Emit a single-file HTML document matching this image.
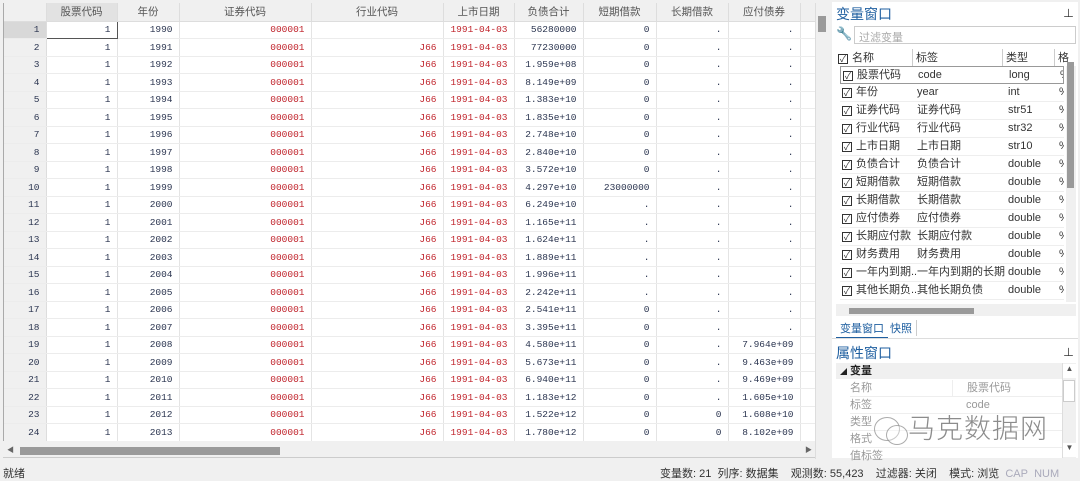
<!DOCTYPE html><html><head><meta charset="utf-8"><style>
*{margin:0;padding:0;box-sizing:border-box}
body{width:1080px;height:479px;background:#f0f0f0;position:relative;overflow:hidden;font-family:"Liberation Sans","Noto Sans CJK SC",sans-serif;}
.ab{position:absolute}
#grid{left:3px;top:3px;width:812px;height:438px;background:#fff;overflow:hidden;border-left:1px solid #aaa}
table{border-collapse:collapse;table-layout:fixed;font-family:"Liberation Mono",monospace;font-size:9.5px;color:#2b3550}
td,th{height:17.5px;border-right:1px solid #e4e4e4;border-bottom:1px solid #ececec;text-align:right;padding-right:6px;white-space:nowrap;overflow:hidden}
th{height:18px;background:#f0f0f0;font-family:"Liberation Sans","Noto Sans CJK SC",sans-serif;font-weight:normal;text-align:center;padding:0;color:#555;font-size:10.5px;border-right:1px solid #ddd;border-bottom:1px solid #ddd}
td.n{background:#f0f0f0;color:#2b3550;border-right:1px solid #ddd}
.r{color:#c0232b}
#side{left:832px;top:2px;width:246px;height:456px;background:#fff}
.vl{font-family:"Liberation Sans","Noto Sans CJK SC",sans-serif;font-size:11px;color:#333}
.vr{position:absolute;left:4px;height:18px;width:224px;border-bottom:1px solid #eee;line-height:17px;overflow:hidden}
.cb{display:inline-block;width:10px;height:10px;border:1px solid #333;vertical-align:-1px;margin-right:4px;position:relative;font-size:9px;line-height:8px;text-align:center;font-style:normal}
.vr span{position:absolute;white-space:nowrap}
</style></head><body>
<div id="grid" class="ab">
<table style="width:812px">
<colgroup><col style="width:42px"><col style="width:71px"><col style="width:62px"><col style="width:132px"><col style="width:132px"><col style="width:71px"><col style="width:69px"><col style="width:73px"><col style="width:72px"><col style="width:72px"><col style="width:16px"></colgroup>
<tr><th></th><th style="background:#e2e2e2">股票代码</th><th>年份</th><th>证券代码</th><th>行业代码</th><th>上市日期</th><th>负债合计</th><th>短期借款</th><th>长期借款</th><th>应付债券</th><th></th></tr>
<tr><td class="n" style="background:#d8d8d8">1</td><td style="border:1px solid #555">1</td><td>1990</td><td class="r">000001</td><td></td><td class="r">1991-04-03</td><td>56280000</td><td>0</td><td>.</td><td>.</td><td></td></tr>
<tr><td class="n">2</td><td>1</td><td>1991</td><td class="r">000001</td><td class="r">J66</td><td class="r">1991-04-03</td><td>77230000</td><td>0</td><td>.</td><td>.</td><td></td></tr>
<tr><td class="n">3</td><td>1</td><td>1992</td><td class="r">000001</td><td class="r">J66</td><td class="r">1991-04-03</td><td>1.959e+08</td><td>0</td><td>.</td><td>.</td><td></td></tr>
<tr><td class="n">4</td><td>1</td><td>1993</td><td class="r">000001</td><td class="r">J66</td><td class="r">1991-04-03</td><td>8.149e+09</td><td>0</td><td>.</td><td>.</td><td></td></tr>
<tr><td class="n">5</td><td>1</td><td>1994</td><td class="r">000001</td><td class="r">J66</td><td class="r">1991-04-03</td><td>1.383e+10</td><td>0</td><td>.</td><td>.</td><td></td></tr>
<tr><td class="n">6</td><td>1</td><td>1995</td><td class="r">000001</td><td class="r">J66</td><td class="r">1991-04-03</td><td>1.835e+10</td><td>0</td><td>.</td><td>.</td><td></td></tr>
<tr><td class="n">7</td><td>1</td><td>1996</td><td class="r">000001</td><td class="r">J66</td><td class="r">1991-04-03</td><td>2.748e+10</td><td>0</td><td>.</td><td>.</td><td></td></tr>
<tr><td class="n">8</td><td>1</td><td>1997</td><td class="r">000001</td><td class="r">J66</td><td class="r">1991-04-03</td><td>2.840e+10</td><td>0</td><td>.</td><td>.</td><td></td></tr>
<tr><td class="n">9</td><td>1</td><td>1998</td><td class="r">000001</td><td class="r">J66</td><td class="r">1991-04-03</td><td>3.572e+10</td><td>0</td><td>.</td><td>.</td><td></td></tr>
<tr><td class="n">10</td><td>1</td><td>1999</td><td class="r">000001</td><td class="r">J66</td><td class="r">1991-04-03</td><td>4.297e+10</td><td>23000000</td><td>.</td><td>.</td><td></td></tr>
<tr><td class="n">11</td><td>1</td><td>2000</td><td class="r">000001</td><td class="r">J66</td><td class="r">1991-04-03</td><td>6.249e+10</td><td>.</td><td>.</td><td>.</td><td></td></tr>
<tr><td class="n">12</td><td>1</td><td>2001</td><td class="r">000001</td><td class="r">J66</td><td class="r">1991-04-03</td><td>1.165e+11</td><td>.</td><td>.</td><td>.</td><td></td></tr>
<tr><td class="n">13</td><td>1</td><td>2002</td><td class="r">000001</td><td class="r">J66</td><td class="r">1991-04-03</td><td>1.624e+11</td><td>.</td><td>.</td><td>.</td><td></td></tr>
<tr><td class="n">14</td><td>1</td><td>2003</td><td class="r">000001</td><td class="r">J66</td><td class="r">1991-04-03</td><td>1.889e+11</td><td>.</td><td>.</td><td>.</td><td></td></tr>
<tr><td class="n">15</td><td>1</td><td>2004</td><td class="r">000001</td><td class="r">J66</td><td class="r">1991-04-03</td><td>1.996e+11</td><td>.</td><td>.</td><td>.</td><td></td></tr>
<tr><td class="n">16</td><td>1</td><td>2005</td><td class="r">000001</td><td class="r">J66</td><td class="r">1991-04-03</td><td>2.242e+11</td><td>.</td><td>.</td><td>.</td><td></td></tr>
<tr><td class="n">17</td><td>1</td><td>2006</td><td class="r">000001</td><td class="r">J66</td><td class="r">1991-04-03</td><td>2.541e+11</td><td>0</td><td>.</td><td>.</td><td></td></tr>
<tr><td class="n">18</td><td>1</td><td>2007</td><td class="r">000001</td><td class="r">J66</td><td class="r">1991-04-03</td><td>3.395e+11</td><td>0</td><td>.</td><td>.</td><td></td></tr>
<tr><td class="n">19</td><td>1</td><td>2008</td><td class="r">000001</td><td class="r">J66</td><td class="r">1991-04-03</td><td>4.580e+11</td><td>0</td><td>.</td><td>7.964e+09</td><td></td></tr>
<tr><td class="n">20</td><td>1</td><td>2009</td><td class="r">000001</td><td class="r">J66</td><td class="r">1991-04-03</td><td>5.673e+11</td><td>0</td><td>.</td><td>9.463e+09</td><td></td></tr>
<tr><td class="n">21</td><td>1</td><td>2010</td><td class="r">000001</td><td class="r">J66</td><td class="r">1991-04-03</td><td>6.940e+11</td><td>0</td><td>.</td><td>9.469e+09</td><td></td></tr>
<tr><td class="n">22</td><td>1</td><td>2011</td><td class="r">000001</td><td class="r">J66</td><td class="r">1991-04-03</td><td>1.183e+12</td><td>0</td><td>.</td><td>1.605e+10</td><td></td></tr>
<tr><td class="n">23</td><td>1</td><td>2012</td><td class="r">000001</td><td class="r">J66</td><td class="r">1991-04-03</td><td>1.522e+12</td><td>0</td><td>0</td><td>1.608e+10</td><td></td></tr>
<tr><td class="n">24</td><td>1</td><td>2013</td><td class="r">000001</td><td class="r">J66</td><td class="r">1991-04-03</td><td>1.780e+12</td><td>0</td><td>0</td><td>8.102e+09</td><td></td></tr>
<tr><td class="n"></td><td></td><td></td><td></td><td></td><td></td><td></td><td></td><td></td><td></td><td></td></tr>
</table></div>
<div class="ab" style="left:815px;top:3px;width:15px;height:456px;background:#f0f0f0;border-left:1px solid #ddd"></div>
<div class="ab" style="left:818px;top:16px;width:8px;height:16px;background:#9a9a9a"></div>
<div class="ab" style="left:3px;top:441px;width:812px;height:17px;background:#f0f0f0;border-bottom:1px solid #ccc"></div>
<div class="ab" style="left:7px;top:445px;font-size:7px;color:#666">◀</div>
<div class="ab" style="left:20px;top:447px;width:260px;height:8px;background:#9a9a9a"></div>
<div class="ab" style="left:805px;top:445px;font-size:7px;color:#666">▶</div>
<div class="ab vl" style="left:3px;top:465px;font-size:11px">就绪</div>
<div class="ab vl" style="left:660px;top:465px;font-size:11px;white-space:nowrap">变量数: 21&nbsp; 列序: 数据集 &nbsp;&nbsp; 观测数: 55,423 &nbsp;&nbsp; 过滤器: 关闭 &nbsp;&nbsp; 模式: 浏览 &nbsp;<span style="color:#aab">CAP&nbsp; NUM</span></div>
<div id="side" class="ab"></div>
<div class="ab" style="left:836px;top:4px;font-size:14px;color:#1f5fa0">变量窗口</div>
<div class="ab" style="left:1063px;top:5px;font-size:11px;color:#333">⊥</div>
<div class="ab" style="left:836px;top:26px;font-size:13px;color:#555">🔧</div>
<div class="ab vl" style="left:854px;top:26px;width:222px;height:18px;border:1px solid #ccc;color:#aaa;font-size:11px;padding:2px 4px">过滤变量</div>
<div class="ab vl" style="left:836px;top:49px;width:232px;height:18px;line-height:18px">
<span class="ab" style="left:2px"><i class="cb">✓</i>名称</span><span class="ab" style="left:76px;border-left:1px solid #ccc;padding-left:3px">标签</span><span class="ab" style="left:166px;border-left:1px solid #ccc;padding-left:3px">类型</span><span class="ab" style="left:218px;border-left:1px solid #ccc;padding-left:3px">格</span></div>
<div class="ab vl" style="left:836px;top:66px;width:232px;height:236px">
<div class="vr" style="top:0;border:1px solid #999"><span style="left:2px"><i class="cb">✓</i>股票代码</span><span style="left:77px">code</span><span style="left:168px">long</span><span style="left:219px">%</span></div>
<div class="vr" style="top:18px"><span style="left:2px"><i class="cb">✓</i>年份</span><span style="left:77px">year</span><span style="left:168px">int</span><span style="left:219px">%</span></div>
<div class="vr" style="top:36px"><span style="left:2px"><i class="cb">✓</i>证券代码</span><span style="left:77px">证券代码</span><span style="left:168px">str51</span><span style="left:219px">%</span></div>
<div class="vr" style="top:54px"><span style="left:2px"><i class="cb">✓</i>行业代码</span><span style="left:77px">行业代码</span><span style="left:168px">str32</span><span style="left:219px">%</span></div>
<div class="vr" style="top:72px"><span style="left:2px"><i class="cb">✓</i>上市日期</span><span style="left:77px">上市日期</span><span style="left:168px">str10</span><span style="left:219px">%</span></div>
<div class="vr" style="top:90px"><span style="left:2px"><i class="cb">✓</i>负债合计</span><span style="left:77px">负债合计</span><span style="left:168px">double</span><span style="left:219px">%</span></div>
<div class="vr" style="top:108px"><span style="left:2px"><i class="cb">✓</i>短期借款</span><span style="left:77px">短期借款</span><span style="left:168px">double</span><span style="left:219px">%</span></div>
<div class="vr" style="top:126px"><span style="left:2px"><i class="cb">✓</i>长期借款</span><span style="left:77px">长期借款</span><span style="left:168px">double</span><span style="left:219px">%</span></div>
<div class="vr" style="top:144px"><span style="left:2px"><i class="cb">✓</i>应付债券</span><span style="left:77px">应付债券</span><span style="left:168px">double</span><span style="left:219px">%</span></div>
<div class="vr" style="top:162px"><span style="left:2px"><i class="cb">✓</i>长期应付款</span><span style="left:77px">长期应付款</span><span style="left:168px">double</span><span style="left:219px">%</span></div>
<div class="vr" style="top:180px"><span style="left:2px"><i class="cb">✓</i>财务费用</span><span style="left:77px">财务费用</span><span style="left:168px">double</span><span style="left:219px">%</span></div>
<div class="vr" style="top:198px"><span style="left:2px;width:74px;overflow:hidden"><i class="cb">✓</i>一年内到期...</span><span style="left:77px;width:89px;overflow:hidden">一年内到期的长期...</span><span style="left:168px">double</span><span style="left:219px">%</span></div>
<div class="vr" style="top:216px"><span style="left:2px;width:74px;overflow:hidden"><i class="cb">✓</i>其他长期负...</span><span style="left:77px">其他长期负债</span><span style="left:168px">double</span><span style="left:219px">%</span></div>
</div>
<div class="ab" style="left:1066px;top:66px;width:10px;height:236px;background:#f0f0f0"></div>
<div class="ab" style="left:1067px;top:62px;width:7px;height:126px;background:#9a9a9a"></div>
<div class="ab" style="left:836px;top:304px;width:240px;height:12px;background:#f0f0f0"></div>
<div class="ab" style="left:849px;top:308px;width:125px;height:6px;background:#9a9a9a"></div>
<div class="ab vl" style="left:836px;top:320px;font-size:11px;color:#1f5fa0;border-bottom:2px solid #1f5fa0;padding:0 4px 1px 4px">变量窗口</div>
<div class="ab vl" style="left:886px;top:320px;font-size:11px;color:#1f5fa0;border-right:1px solid #ccc;padding:0 4px">快照</div>
<div class="ab" style="left:832px;top:338px;width:246px;height:1px;background:#ddd"></div>
<div class="ab" style="left:836px;top:343px;font-size:14px;color:#1f5fa0">属性窗口</div>
<div class="ab" style="left:1063px;top:344px;font-size:11px;color:#333">⊥</div>
<div class="ab vl" style="left:836px;top:363px;width:226px;height:95px;font-size:11px;background:#fff">
<div style="height:16px;background:#f0f0f0;line-height:16px;padding-left:4px;font-weight:bold;color:#222"><span style="font-size:7px">◢</span> 变量</div>
<div style="position:absolute;left:14px;top:17px;width:212px;color:#999;line-height:17px">
<div style="border-bottom:1px solid #eee;height:17px">名称<span style="position:absolute;left:102px;border-left:1px solid #eee;padding-left:14px">股票代码</span></div>
<div style="border-bottom:1px solid #eee;height:17px">标签<span style="position:absolute;left:102px;padding-left:14px">code</span></div>
<div style="border-bottom:1px solid #eee;height:17px">类型</div>
<div style="border-bottom:1px solid #eee;height:17px">格式</div>
<div style="height:17px">值标签</div></div>
<div class="ab" style="left:72px;top:48px;font-size:27px;color:#666;opacity:.75;font-family:'Noto Sans CJK SC',sans-serif;font-weight:300;letter-spacing:1px;line-height:32px">马克数据网</div>
<div class="ab" style="left:38px;top:54px;width:26px;height:24px;border:1.5px solid #888;border-radius:50%;opacity:.7"></div>
<div class="ab" style="left:50px;top:62px;width:22px;height:20px;border:1.5px solid #888;border-radius:50%;background:rgba(255,255,255,.5);opacity:.7"></div>
</div>
<div class="ab" style="left:1062px;top:363px;width:14px;height:95px;background:#f0f0f0;border-left:1px solid #ddd"></div>
<div class="ab" style="left:1063px;top:364px;width:13px;height:14px;font-size:8px;color:#555;text-align:center;background:#fff">▲</div>
<div class="ab" style="left:1063px;top:380px;width:12px;height:22px;background:#fff;border:1px solid #ccc"></div>
<div class="ab" style="left:1063px;top:443px;width:13px;height:14px;font-size:8px;color:#555;text-align:center;background:#fff">▼</div>
</body></html>
